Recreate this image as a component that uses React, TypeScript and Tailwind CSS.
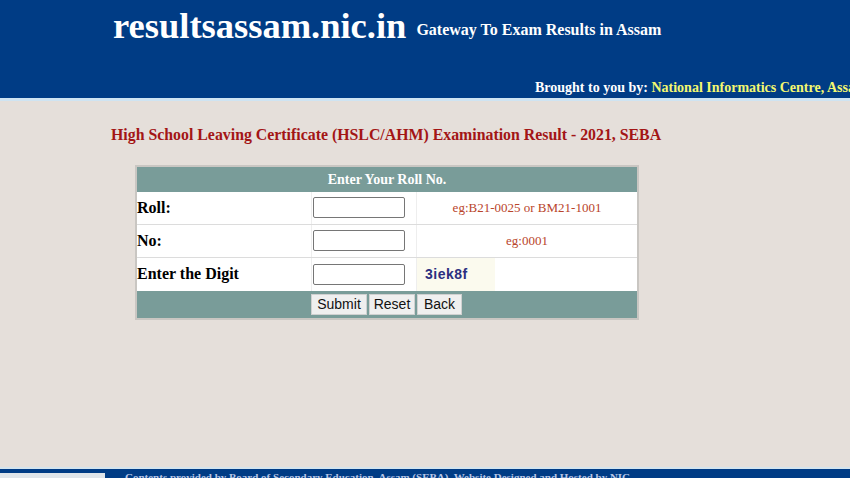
import React from 'react';

const serif = { fontFamily: '"Liberation Serif", "Times New Roman", serif' };
const sans = { fontFamily: '"Liberation Sans", Arial, sans-serif' };

function Header() {
  return (
    <div className="bg-[#003c85] h-[98px] overflow-hidden">
      <div className="flex items-end pl-[113px] pt-[5px] whitespace-nowrap" style={serif}>
        <span className="text-white font-bold text-[36.5px] leading-[42px]">resultsassam.nic.in</span>
        <span className="text-white font-bold text-[16px] ml-[10px] mb-[5px]">Gateway To Exam Results in Assam</span>
      </div>
      <div className="pl-[535px] mt-[30px] whitespace-nowrap font-bold text-[14px]" style={serif}>
        <span className="text-white">Brought to you by: </span>
        <span className="text-[#f4f870]">National Informatics Centre, Assam</span>
      </div>
    </div>
  );
}

function Row({ label, hint, last }: { label: string; hint?: React.ReactNode; last?: boolean }) {
  return (
    <div className={`grid grid-cols-[175px_105px_1fr] h-[33px] bg-white ${last ? '' : 'border-b border-[#dcdcdc]'}`}>
      <div className="flex items-center font-bold text-[16px] text-black border-r border-[#eeeeee]" style={serif}>
        {label}
      </div>
      <div className="flex items-center pl-[1px] border-r border-[#eeeeee]">
        <input className="w-[92px] h-[21px] border border-[#767676] rounded-[2px] bg-white outline-none" />
      </div>
      {hint}
    </div>
  );
}

function Hint({ text }: { text: string }) {
  return (
    <div className="flex items-center justify-center text-[13px] text-[#b9452b]" style={serif}>
      {text}
    </div>
  );
}

const buttons = [
  { label: 'Submit', w: 'w-[56px]' },
  { label: 'Reset', w: 'w-[46px]' },
  { label: 'Back', w: 'w-[45px]' },
];

export default function App() {
  return (
    <div className="w-[850px] h-[478px] bg-[#e5dfda] overflow-hidden flex flex-col">
      <Header />
      <div className="h-[3px] bg-[#cfe4f2]" />
      <div className="pl-[111px] mt-[22px] font-bold text-[15.85px] text-[#a31515]" style={serif}>
        High School Leaving Certificate (HSLC/AHM) Examination Result - 2021, SEBA
      </div>
      <div className="ml-[135px] mt-[18px] w-[504px] border-2 border-[#c9c6c2] bg-[#c9c6c2]">
        <div className="h-[25px] bg-[#799c99] flex items-center justify-center text-white font-bold text-[14px]" style={serif}>
          Enter Your Roll No.
        </div>
        <Row label="Roll:" hint={<Hint text="eg:B21-0025 or BM21-1001" />} />
        <Row label="No:" hint={<Hint text="eg:0001" />} />
        <Row
          label="Enter the Digit"
          last
          hint={
            <div className="flex">
              <div
                className="w-[78px] bg-[#fbfaee] flex items-center pl-[8px] font-bold text-[14px] text-[#2b2f80] tracking-[0.5px]"
                style={sans}
              >
                3iek8f
              </div>
            </div>
          }
        />
        <div className="h-[27px] bg-[#799c99] flex items-center pl-[174px] gap-[2px]">
          {buttons.map((b) => (
            <button
              key={b.label}
              className={`${b.w} h-[21px] bg-[#efefef] border border-[#d0d0d0] text-[14px] text-[#111] leading-none`}
              style={sans}
            >
              {b.label}
            </button>
          ))}
        </div>
      </div>
      <div className="flex-1" />
      <div className="h-[2px] bg-[#d4e4ee]" />
      <div className="h-[9px] bg-[#003c85] flex items-start whitespace-nowrap overflow-hidden">
        <div className="w-[105px] h-[5px] bg-[#dfe5ea] mt-[4px]" />
        <span className="ml-[20px] mt-[3px] text-[11px] font-bold text-[#b8c6e6] leading-none" style={serif}>
          Contents provided by Board of Secondary Education, Assam (SEBA). Website Designed and Hosted by NIC
        </span>
      </div>
    </div>
  );
}
